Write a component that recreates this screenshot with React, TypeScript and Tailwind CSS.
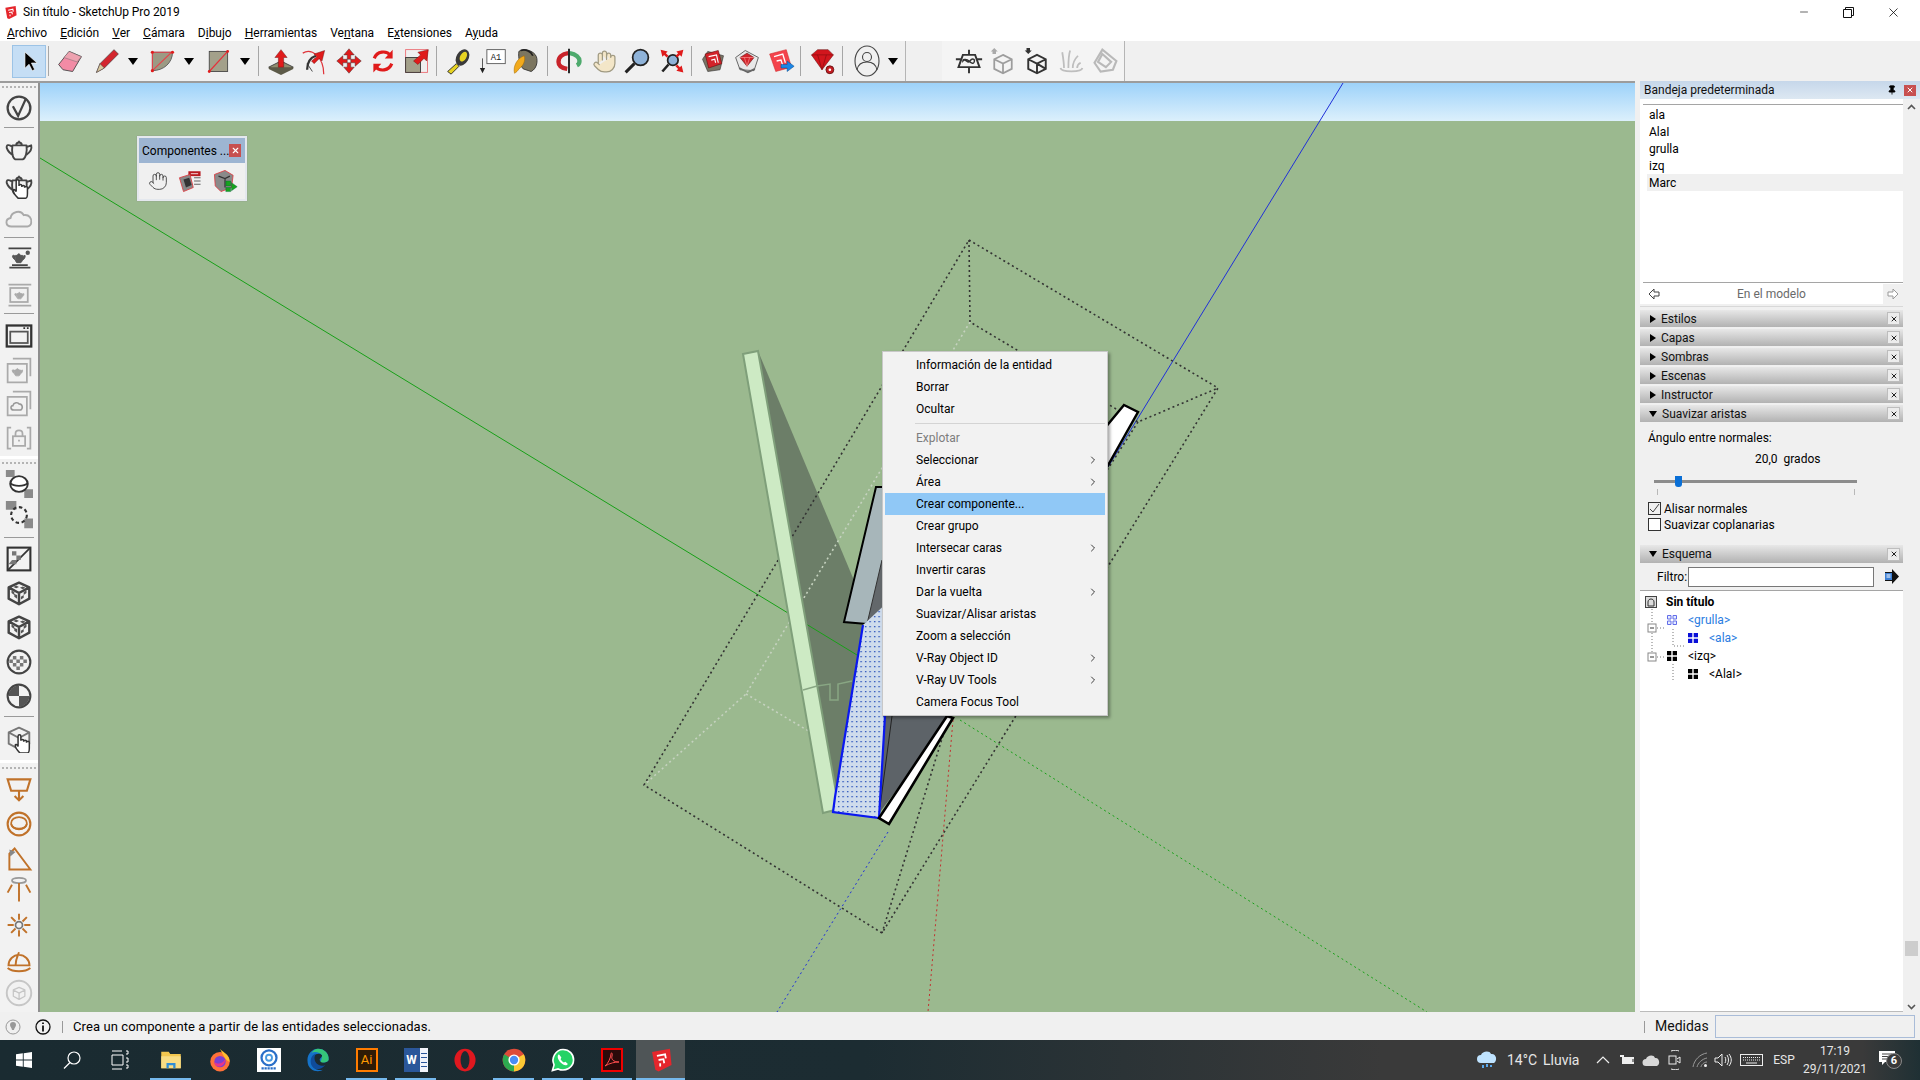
import type { ReactNode } from "react";
import { ChevronRight, Hand, Minus, Pin, X } from "lucide-react";

function Ic({ s = 28, children }: { s?: number; children: ReactNode }) {
  return (
    <svg viewBox="0 0 32 32" width={s} height={s} fill="none">
      {children}
    </svg>
  );
}

const Arrow4 = ({ color = "#e01b1b" }: { color?: string }) => (
  <>
    {[0, 90, 180, 270].map((r) => (
      <path key={r} d="M16 2l6 7h-4v5h-4V9h-4z" fill={color} stroke="#333" strokeWidth=".5" transform={`rotate(${r} 16 16)`} />
    ))}
  </>
);

const Cube = ({ c = "#444", w = 2.4 }: { c?: string; w?: number }) => (
  <path d="M16 5l11 5v12l-11 6-11-6V10zM5 10l11 6 11-6M16 16v12" stroke={c} strokeWidth={w} strokeLinejoin="round" />
);

const Teapot = ({ c = "#444", fill = "none" }: { c?: string; fill?: string }) => (
  <path d="M9 11h15c1 7-1 14-4 15h-8c-3-1-4-8-3-15zM9 13C5 9 2 11 3 14c1 3 4 6 7 8M24 13l5-2c1 4-2 8-5 10M13 11c0-4 6-4 6 0M16 6v1" stroke={c} strokeWidth="2" fill={fill} strokeLinejoin="round" />
);

const HandMini = () => (
  <path d="M15 30c-3-3-5-6-5-8 0-2 2-1 3 1V12c0-2 3-2 3 0v5c0-2 3-2 3 0v1c0-2 3-2 3 0v1c0-2 3-2 3 0v6c0 3-1 5-2 5z" fill="#fff" stroke="#333" strokeWidth="1.6" />
);

const CheckerBox = () => (
  <>
    <Cube c="#444" w={2.6} />
    <path d="M8 13l3 2v3l-3-2zM14 18v4l-3-2v-3zM21 15l3-2v3l-3 2zM18 20l3-2v3l-3 2zM13 8l3 1.500-3 1.500-3-1.500zM20 9l3 1.500-3 1.500-3-1.500z" fill="#555" />
  </>
);

const RubyBox = ({ c = "#d3232a" }: { c?: string }) => (
  <>
    <polygon points="4,14 10,5 28,10 24,26 10,28" fill="#7a7465" stroke="#333" strokeWidth=".7" />
    <polygon points="7,8 22,4 26,19 11,24" fill={c} stroke="#611" strokeWidth=".7" />
    <path d="M11 11l9-2 2 9M14 15l4-1 1 4" stroke="#fff" strokeWidth="1.300" />
  </>
);

const MiniGrid = ({ c = "#000", soft = false }: { c?: string; soft?: boolean }) => (
  <svg width="10" height="10" viewBox="0 0 10 10" className={soft ? "opacity-70" : ""}>
    {soft ? (
      <path d="M.5.500h3.500v3.500H.5zM6 .500h3.500v3.500H6zM.5 6h3.500v3.500H.5zM6 6h3.500v3.500H6z" stroke={c} strokeWidth="1" fill="#dbe6ff" />
    ) : (
      <path d="M0 0h4.300v4.300H0zM5.700 0H10v4.300H5.700zM0 5.700h4.300V10H0zM5.700 5.700H10V10H5.700z" fill={c} />
    )}
  </svg>
);

function Cell({ w = "w-[34px]", className = "", children }: { w?: string; className?: string; children?: ReactNode }) {
  return <div className={`flex h-[33px] shrink-0 items-center justify-center ${w} ${className}`}>{children}</div>;
}

const Sep = ({ className = "" }: { className?: string }) => <div className={`h-[30px] w-px shrink-0 bg-[#a6a6a6] ${className}`} />;

const Drop = ({ className = "" }: { className?: string }) => (
  <Cell w="w-[18px]" className={className}>
    <div className="h-0 w-0 border-x-[5px] border-t-[7px] border-x-transparent border-t-black" />
  </Cell>
);

function TopToolbar() {
  return (
    <div className="flex h-[42px] shrink-0 items-center border-b-2 border-[#9c9c9c] bg-[#f0f0f0] pl-[12px]">
      <Cell className="border border-[#9cc3e6] bg-[#c5def5]">
        <Ic s={26}><path d="M11 5v20l5-5 4 8 3-1.500-4-8h7z" fill="#000" stroke="#fff" strokeWidth=".8" /></Ic>
      </Cell>
      <Sep className="ml-[2px]" />
      <Cell className="ml-[4px]">
        <Ic><polygon points="3,20 15,5 29,11 19,28 8,26" fill="#f28ba5" stroke="#444" /><polygon points="15,5 29,11 24,17 9,12" fill="#eda2b0" stroke="#666" strokeWidth=".5" /></Ic>
      </Cell>
      <Cell className="ml-[3px]">
        <Ic><polygon points="4,29 8,19 24,3 29,8 13,24" fill="#d3262e" stroke="#333" strokeWidth=".7" /><polygon points="4,29 8,19 13,24" fill="#d8c9a0" stroke="#333" strokeWidth=".5" /></Ic>
      </Cell>
      <Drop />
      <Cell className="ml-[3px]">
        <Ic><path d="M5 6h23c0 12-10 21-23 21z" fill="#9c9a84" stroke="#555" /><path d="M5 27L27 6H5z" stroke="#e8414a" strokeWidth="1.200" /><circle cx="5" cy="27" r="1.800" fill="#e01b1b" /><circle cx="28" cy="6" r="1.800" fill="#e01b1b" /><circle cx="5" cy="6" r="1.800" fill="#e01b1b" /></Ic>
      </Cell>
      <Drop className="ml-px" />
      <Cell className="ml-[3px]">
        <Ic><rect x="6" y="5" width="21" height="23" fill="#a3a08a" stroke="#444" /><path d="M6 28L27 5" stroke="#e6303a" strokeWidth="1.400" /><circle cx="6" cy="28" r="1.600" fill="#e01b1b" /><circle cx="27" cy="5" r="1.600" fill="#e01b1b" /></Ic>
      </Cell>
      <Drop className="ml-px" />
      <Sep className="ml-[4px]" />
      <Cell className="ml-[5px]">
        <Ic><polygon points="16,16 30,23 16,30 2,23" fill="#8f8d70" stroke="#333" /><path d="M2 23v2l14 7 14-7v-2" fill="#5c5a48" /><path d="M16 3l7 9h-4v11h-6V12H9z" fill="#e01b1b" stroke="#611" strokeWidth=".5" /></Ic>
      </Cell>
      <Cell>
        <Ic><path d="M2 7c10-6 24 4 24 24" stroke="#e0353b" strokeWidth="1.400" /><path d="M7 26c0-9 4-14 10-16" stroke="#333" strokeWidth="2.600" /><path d="M15 8l12-4-3 12-3-3-6 6-3-3 6-5z" fill="#e01b1b" stroke="#611" strokeWidth=".5" /><path d="M13 28L7 19" stroke="#333" /></Ic>
      </Cell>
      <Cell><Ic><Arrow4 /></Ic></Cell>
      <Cell>
        <Ic><path d="M6 13a11 11 0 0 1 19-3M26 19a11 11 0 0 1-19 3" stroke="#e01b1b" strokeWidth="3.600" /><path d="M27 3v10H18zM5 29V19h9z" fill="#e01b1b" /></Ic>
      </Cell>
      <Cell>
        <Ic><rect x="3" y="3" width="25" height="26" stroke="#ea6a70" /><rect x="3" y="12" width="17" height="17" fill="#a3a08a" stroke="#333" /><path d="M12 16l8-7-3-3 12-3-2 13-3-3-7 7z" fill="#e01b1b" stroke="#611" strokeWidth=".5" /></Ic>
      </Cell>
      <Sep className="ml-[2px]" />
      <Cell className="ml-[5px]">
        <Ic><path d="M3 28l10-9 3 3-9 9z" fill="#e7d322" stroke="#222" /><ellipse cx="20" cy="12" rx="7" ry="10" transform="rotate(30 20 12)" fill="#3a3a3a" /><ellipse cx="21" cy="11" rx="3.500" ry="6" transform="rotate(30 21 11)" fill="#e7d322" /></Ic>
      </Cell>
      <Cell w="w-[32px]" className="ml-[1px]">
        <Ic><rect x="9" y="3" width="21" height="16" fill="#fff" stroke="#555" /><text x="19.500" y="15" fontSize="10" fontFamily="Liberation Mono" textAnchor="middle" fill="#222">A1</text><path d="M4 13v13" stroke="#444" /><path d="M1 24h6l-3 6z" fill="#222" /></Ic>
      </Cell>
      <Cell w="w-[32px]">
        <Ic><path d="M9 5c6-4 17-1 20 6 2 6 0 14-6 17l-9-3c-4-4-6-13-5-20z" fill="#7c7660" stroke="#333" /><path d="M4 30c-2-8 3-17 11-20 2 5-1 12-6 15-1 2-3 4-5 5z" fill="#f2aa1c" stroke="#a46c00" strokeWidth=".6" /><path d="M11 4c6-2 12 1 14 6" stroke="#222" strokeWidth="2" /></Ic>
      </Cell>
      <Sep className="ml-[6px]" />
      <Cell className="ml-[4px]">
        <Ic><path d="M15 7C8 8 4 12 4 17c0 4 4 7 10 8" stroke="#c8232a" strokeWidth="5" /><path d="M17 7c7 1 11 5 11 9 0 2-1 4-3 5" stroke="#4eaa6d" strokeWidth="5" /><path d="M16 2v28" stroke="#222" strokeWidth="2.200" /></Ic>
      </Cell>
      <Cell className="ml-[1px]">
        <Hand size={25} fill="#f3e6c8" stroke="#a09a82" strokeWidth={1.200} />
      </Cell>
      <Cell w="w-[32px]">
        <Ic><circle cx="20" cy="12" r="9" fill="#8fb3d9" stroke="#222" strokeWidth="2" /><path d="M13 19L3 29" stroke="#222" strokeWidth="3.400" /></Ic>
      </Cell>
      <Cell className="ml-[2px]">
        <Ic><circle cx="17" cy="15" r="6" fill="#8fb3d9" stroke="#222" strokeWidth="2" /><path d="M12 20L5 28" stroke="#222" strokeWidth="3" /><path d="M3 3l8 2-2 2 3 3-2 2-3-3-2 2zM29 3l-2 8-2-2-3 3-2-2 3-3-2-2zM29 29l-8-2 2-2-3-3 2-2 3 3 2-2z" fill="#e01b1b" /></Ic>
      </Cell>
      <Sep className="ml-[2px]" />
      <Cell className="ml-[4px]"><Ic><RubyBox /></Ic></Cell>
      <Cell>
        <Ic><polygon points="3,12 14,4 29,12 24,27 8,26" fill="#e8e8e8" stroke="#555" /><polygon points="8,12 16,7 24,12 16,22" fill="#d3232a" stroke="#611" strokeWidth=".7" /><path d="M8 12h16M13 12l3 10 3-10" stroke="#ff9a9a" strokeWidth=".7" /><path d="M7 24l10 5 8-4" stroke="#666" strokeWidth="2" /></Ic>
      </Cell>
      <Cell>
        <Ic><polygon points="3,8 22,3 28,23 10,28" fill="#f4434c" stroke="#c22" strokeWidth=".6" /><path d="M8 11l10-3 3 10M11 16l5-1 2 6" stroke="#fff" strokeWidth="1.500" /><path d="M16 20h7v-4l8 6-8 6v-4h-7z" fill="#1c86e6" stroke="#0b4f8f" strokeWidth=".6" /></Ic>
      </Cell>
      <Sep className="ml-[2px]" />
      <Cell className="ml-[4px]">
        <Ic><polygon points="4,9 11,3 23,3 29,9 16,26" fill="#d2161d" stroke="#611" strokeWidth=".6" /><path d="M4 9h25M11 9l5 17 5-17" stroke="#8c0c10" strokeWidth=".8" /><circle cx="25" cy="26" r="4.500" fill="#c41c22" stroke="#611" /><circle cx="25" cy="26" r="1.500" fill="#fff" /></Ic>
      </Cell>
      <Sep className="ml-[3px]" />
      <Cell className="ml-[7px]">
        <Ic s={32}><ellipse cx="16" cy="16" rx="12" ry="15" stroke="#444" strokeWidth="1.100" /><circle cx="16" cy="12" r="4.500" stroke="#444" strokeWidth="1.100" /><path d="M6 25c1-6 5-8 10-8s9 2 10 8" stroke="#444" strokeWidth="1.100" /></Ic>
      </Cell>
      <Drop />
      <div className="ml-[3px] h-full w-px bg-[#b5b5b5]" />

      <div className="ml-[36px] flex h-full items-center border-r border-[#b5b5b5] bg-[#f4f4f4] pl-[10px] pr-[2px]">
        <Cell>
          <Ic><path d="M9 9h14l5 14H4zM1 14h6M25 14h6M16 3v6M16 23v7" stroke="#333" strokeWidth="2.200" /><path d="M9 16c3-4 5 4 8 0s6-2 5 1-4 1-6-1-7-3-7 0z" stroke="#333" strokeWidth="1.600" /></Ic>
        </Cell>
        <Cell><Ic><g opacity=".55"><path d="M16 9l10 5v11l-10 5-10-5V14zM6 14l10 5 10-5M16 19v11" stroke="#555" strokeWidth="2" /></g><path d="M6 1l4 4H8v3H4V5H2z" fill="#aaa" /></Ic></Cell>
        <Cell>
          <Ic><path d="M16 9l10 5v11l-10 5-10-5V14zM6 14l10 5 10-5M16 19v11M16 19l10 6" stroke="#333" strokeWidth="2.200" /><path d="M6 8L2 4h2V1h4v3h2z" fill="#333" /></Ic>
        </Cell>
        <Cell>
          <Ic><g opacity=".5" stroke="#888" strokeWidth="2"><path d="M4 24c1 5 24 5 25 0M8 24c0-6-1-12-2-18M13 24c0-8 0-14 2-20M18 24c0-6 2-10 6-14M23 24c0-3 2-5 4-6" /></g></Ic>
        </Cell>
        <Cell>
          <Ic><g opacity=".55" stroke="#888" strokeWidth="2.400"><path d="M4 18L13 3l16 13-4 10-14 2zM13 8l10 9-6 6-9-6z" /></g></Ic>
        </Cell>
      </div>
    </div>
  );
}

function VCell({ mt, children }: { mt: string; children?: ReactNode }) {
  return <div className={`flex h-[30px] w-full shrink-0 items-center justify-center ${mt}`}>{children}</div>;
}

const HLine = ({ mt }: { mt: string }) => <div className={`mx-auto h-px w-[30px] shrink-0 bg-[#9a9a9a] ${mt}`} />;

const Grip = ({ mt }: { mt: string }) => (
  <div className={`mx-auto h-0 w-[34px] shrink-0 border-t-2 border-dotted border-[#b4b4b4] ${mt}`} />
);

function LeftToolbar() {
  const g = "#aaa";
  const o = "#c0722a";
  return (
    <div className="flex w-[40px] shrink-0 flex-col overflow-hidden border-r-2 border-[#8f8f8f] bg-[#f2f2f2]">
      <Grip mt="mt-[3px]" />
      <VCell mt="mt-[5px]"><Ic><circle cx="16" cy="16" r="13" stroke="#444" strokeWidth="2.600" /><path d="M9 14l6 11c3-7 6-13 9-20" stroke="#444" strokeWidth="2.600" /></Ic></VCell>
      <HLine mt="mt-[4px]" />
      <VCell mt="mt-[7px]"><Ic s={30}><Teapot /></Ic></VCell>
      <VCell mt="mt-[5px]"><Ic s={30}><Teapot /><HandMini /></Ic></VCell>
      <VCell mt="mt-[3px]"><Ic s={30}><path d="M8 25c-7 0-7-8-1-9 1-7 11-9 14-3 6-1 9 4 8 8 0 2-2 4-4 4z" stroke={g} strokeWidth="2" /></Ic></VCell>
      <HLine mt="mt-[4px]" />
      <VCell mt="mt-[5px]"><Ic><path d="M4 5h26M5 27h24M8 24h18" stroke="#444" strokeWidth="2" /><g transform="translate(7 7) scale(.55)"><Teapot c="#555" fill="#555" /></g><circle cx="26" cy="10" r="2.500" fill="#555" /></Ic></VCell>
      <VCell mt="mt-[7px]"><Ic><path d="M4 4h26M4 28h26" stroke={g} strokeWidth="2" /><rect x="6" y="8" width="20" height="16" stroke={g} strokeWidth="2" /><g transform="translate(10 10) scale(.4)"><Teapot c={g} fill={g} /></g></Ic></VCell>
      <HLine mt="mt-[3px]" />
      <VCell mt="mt-[7px]"><Ic><rect x="2" y="4" width="28" height="24" stroke="#333" strokeWidth="2.600" /><rect x="6" y="11" width="20" height="13" stroke="#555" strokeWidth="2" /><path d="M21 7h2M25 7h2" stroke="#333" strokeWidth="1.800" /></Ic></VCell>
      <VCell mt="mt-[4px]"><Ic><path d="M9 3h20v20M3 9h22v21H3z" stroke={g} strokeWidth="2" /><g transform="translate(7 11) scale(.45)"><Teapot c={g} fill={g} /></g></Ic></VCell>
      <VCell mt="mt-[3px]"><Ic><path d="M9 3h20v20M3 9h22v21H3z" stroke={g} strokeWidth="2" /><path d="M10 24c-4 0-4-5-1-5 1-4 6-4 7-2 4 0 5 5 2 7z" stroke="#999" strokeWidth="1.800" /></Ic></VCell>
      <VCell mt="mt-[5px]"><Ic><path d="M7 4H3v24h4M25 4h4v24h-4" stroke={g} strokeWidth="2" /><rect x="9" y="14" width="14" height="11" stroke={g} strokeWidth="2" /><path d="M12 14v-3c0-5 8-5 8 0v3M16 18v2" stroke={g} strokeWidth="2" /></Ic></VCell>
      <div className="mt-[3px] h-[3px] w-full shrink-0 bg-white" />
      <Grip mt="mt-[3px]" />
      <VCell mt="mt-[5px]">
        <Ic><path d="M1 0h10v8H1zM22 22h10v10H22z" fill="#8a8a8a" /><ellipse cx="16" cy="16" rx="10" ry="9" fill="#fff" stroke="#333" strokeWidth="2.200" /><path d="M6 15c4 4 16 4 20 0" stroke="#333" strokeWidth="2" /></Ic>
      </VCell>
      <VCell mt="mt-px">
        <Ic><path d="M1 0h12v10H1zM22 20h10v11H22z" fill="#8a8a8a" /><circle cx="16" cy="16" r="9" stroke="#333" strokeWidth="2.400" strokeDasharray="4 3" /></Ic>
      </VCell>
      <HLine mt="mt-[7px]" />
      <VCell mt="mt-[6px]"><Ic><rect x="3" y="3" width="26" height="26" stroke="#333" strokeWidth="2.400" /><path d="M3 29L29 3" stroke="#333" strokeWidth="2" /><path d="M8 7h5v5H8zM13 12h5v5h-5zM4 22l4-5h5v5z" fill="#777" /></Ic></VCell>
      <VCell mt="mt-[4px]"><Ic s={30}><CheckerBox /></Ic></VCell>
      <VCell mt="mt-[4px]"><Ic s={30}><CheckerBox /></Ic></VCell>
      <VCell mt="mt-[5px]"><Ic><circle cx="16" cy="16" r="13" stroke="#444" strokeWidth="2.400" /><path d="M9 9h4v4H9zM17 9h4v4h-4zM13 13h4v4h-4zM21 13h4v4h-4zM5 13h4v4H5zM9 17h4v4H9zM17 17h4v4h-4zM13 21h4v4h-4z" fill="#777" /></Ic></VCell>
      <VCell mt="mt-[4px]"><Ic><circle cx="16" cy="16" r="13" stroke="#444" strokeWidth="2.400" /><path d="M4 16a12 12 0 0 1 12-12v12zM16 16h12a12 12 0 0 1-12 12z" fill="#555" /></Ic></VCell>
      <HLine mt="mt-[5px]" />
      <VCell mt="mt-[6px]"><Ic s={30}><Cube c="#777" w={2} /><g transform="translate(2 2)"><HandMini /></g></Ic></VCell>
      <div className="mt-[7px] h-[3px] w-full shrink-0 bg-white" />
      <Grip mt="mt-[4px]" />
      <VCell mt="mt-[5px]"><Ic><path d="M3 5h26l-4 13H7zM16 18v11M11 24l5 5 5-5" stroke={o} strokeWidth="2.400" /></Ic></VCell>
      <VCell mt="mt-[5px]"><Ic><circle cx="16" cy="16" r="13" stroke={o} strokeWidth="2.400" /><ellipse cx="16" cy="15" rx="9" ry="7" stroke={o} strokeWidth="2" /><path d="M7 16c2 7 16 7 18 0" stroke={o} strokeWidth="2" /></Ic></VCell>
      <VCell mt="mt-[5px]"><Ic><path d="M5 28L29 28 11 4 5 10z" stroke={o} strokeWidth="2.200" /><path d="M5 5l7 3-6 5z" fill="#888" /></Ic></VCell>
      <VCell mt="mt-px"><Ic><ellipse cx="16" cy="5" rx="8" ry="3" stroke="#999" strokeWidth="2" /><path d="M16 8v21M8 10L3 19M24 10l5 9" stroke={o} strokeWidth="2.200" /></Ic></VCell>
      <VCell mt="mt-[5px]"><Ic><circle cx="16" cy="16" r="4" stroke="#777" strokeWidth="2" /><path d="M16 3v7M16 22v7M3 16h7M22 16h7M7 7l5 5M20 20l5 5M25 7l-5 5M12 20l-5 5" stroke={o} strokeWidth="2.200" /></Ic></VCell>
      <VCell mt="mt-[6px]"><Ic><path d="M4 21a12 12 0 0 1 24 0zM12 21c0-7 3-12 4-15M3 24c6 5 20 5 26 0" stroke={o} strokeWidth="2.200" /></Ic></VCell>
      <VCell mt="mt-[2px]"><Ic><circle cx="16" cy="16" r="14" stroke="#c6c6c6" strokeWidth="2.200" /><g transform="translate(6.500 6.500) scale(.6)"><Cube c="#c6c6c6" /></g></Ic></VCell>
    </div>
  );
}

function Scene() {
  const dark = { stroke: "#333", strokeWidth: 1.600, strokeDasharray: "2 3" };
  const light = { stroke: "#c5d2bf", strokeWidth: 1.600, strokeDasharray: "2 3" };
  return (
    <svg viewBox="40 83 1595 929" className="absolute inset-0 h-full w-full">
      <defs>
        <pattern id="dots" width="4.500" height="5" patternUnits="userSpaceOnUse">
          <rect width="4.500" height="5" fill="#cfdcec" />
          <rect x="1" y="1" width="1.300" height="1.300" fill="#1e49b8" />
        </pattern>
      </defs>
      <polygon points="758,351 853,578 863,625 835,795" fill="#6c7e68" />
      <path d="M40 158L857 655" stroke="#18a018" />
      <path d="M960 720L1427 1012" stroke="#18a018" strokeDasharray="2 3" />
      <path d="M1343 83L1108 467" stroke="#2030d8" />
      <path d="M888 832L777 1012" stroke="#2030d8" strokeDasharray="2 3" />
      <path d="M953 720L928 1012" stroke="#c23030" strokeDasharray="2 3" />
      <path d="M970 322L746 694L644 785M746 694L812 733" {...light} fill="none" />
      <path d="M969 240L1218 388L882 933L644 785ZM969 240L970 322L1138 422L1218 388M1138 422L949 716L882 933" {...dark} fill="none" />
      <polygon points="743,354 758,351 839,809 823,813" fill="#cdeac4" stroke="#7f9f7a" strokeWidth="2" />
      <path d="M803 690L817 686L830 684V700H838V684L852 681" stroke="#88a683" strokeWidth="1.500" fill="none" />
      <polygon points="876,487 890,487 890,590 867,624 844,622" fill="#a7b6ba" stroke="#000" strokeWidth="2" />
      <polygon points="867,624 882,560 890,560 890,600" fill="#63686b" stroke="#333" />
      <polygon points="885,716 952,716 880,812" fill="#5d6368" />
      <path d="M892 716L880 807" stroke="#222" />
      <polygon points="863,625 890,600 885,716 879,818 833,812 835,795" fill="url(#dots)" />
      <path d="M863 625L835 797L833 812L879 818L885 716" stroke="#0a18f0" strokeWidth="2.200" fill="none" />
      <polygon points="947,716 953,718 889,824 879,818" fill="#fff" stroke="#000" strokeWidth="2.600" />
      <polygon points="1124,405 1138,412 1107,467 1095,440" fill="#fff" stroke="#000" strokeWidth="2.400" />
    </svg>
  );
}

const menuItems = [
  { label: "Explotar", disabled: true },
  { label: "Seleccionar", arrow: true },
  { label: "Área", arrow: true },
  { label: "Crear componente...", active: true },
  { label: "Crear grupo" },
  { label: "Intersecar caras", arrow: true },
  { label: "Invertir caras" },
  { label: "Dar la vuelta", arrow: true },
  { label: "Suavizar/Alisar aristas" },
  { label: "Zoom a selección" },
  { label: "V-Ray Object ID", arrow: true },
  { label: "V-Ray UV Tools", arrow: true },
  { label: "Camera Focus Tool" },
];

function MenuRow({ label, disabled, arrow, active }: { label: string; disabled?: boolean; arrow?: boolean; active?: boolean }) {
  return (
    <div className={`flex h-[22px] items-center justify-between pl-[31px] pr-[6px] ${active ? "bg-[#90c8f6]" : ""} ${disabled ? "text-[#7d7d7d]" : "text-black"}`}>
      <span>{label}</span>
      {arrow && <ChevronRight size={12} strokeWidth={1.500} />}
    </div>
  );
}

function ContextMenu() {
  return (
    <div className="absolute left-[842px] top-[268px] w-[226px] border border-[#c8c8c8] bg-[#f2f2f2] p-[2px] text-[12px] shadow-[2px_2px_3px_rgba(0,0,0,0.35)]">
      <MenuRow label="Información de la entidad" />
      <MenuRow label="Borrar" />
      <MenuRow label="Ocultar" />
      <div className="my-[3px] ml-[30px] h-px bg-[#d4d4d4]" />
      {menuItems.map((m) => (
        <MenuRow key={m.label} {...m} />
      ))}
    </div>
  );
}

function ComponentsWindow() {
  return (
    <div className="absolute left-[97px] top-[53px] w-[110px] border-2 border-[#e4e8ee] bg-[#f0f0f0] shadow-[0_0_1px_#888]">
      <div className="flex h-[25px] items-center justify-between whitespace-nowrap bg-[#9db5d2] pl-[3px] pr-[4px] text-[12px] text-black">
        <span>Componentes ...</span>
        <span className="flex h-[13px] w-[12px] items-center justify-center bg-[#c75050] text-white"><X size={9} strokeWidth={3} /></span>
      </div>
      <div className="flex h-[36px] items-center gap-[9px] pl-[9px]">
        <Hand size={20} strokeWidth={1} stroke="#333" />
        <Ic s={26}><path d="M14 4h15v6H14z" fill="#b81a20" /><path d="M17 7h9" stroke="#fff" /><polygon points="3,12 16,8 20,24 8,29" fill="#888" stroke="#e0353b" /><path d="M8 14l7-2 3 9-7 3z" fill="#333" /><path d="M21 12h8M21 16h8M21 20h8" stroke="#444" /></Ic>
        <Ic s={26}><polygon points="3,8 16,3 26,9 24,24 11,29 4,22" fill="#8a8a8a" stroke="#e0353b" /><path d="M8 10l8 3 6-3M16 13v11" stroke="#333" strokeWidth="1.500" /><path d="M17 16h6v6h-6zM24 18l7 5-7 5zM17 24h6v5h-6z" fill="#17a31e" stroke="#063" strokeWidth=".5" /></Ic>
      </div>
    </div>
  );
}

function Viewport() {
  return (
    <div className="relative flex min-w-0 flex-1 flex-col overflow-hidden">
      <div className="h-[38px] shrink-0 bg-gradient-to-b from-[#9dd2f9] to-[#dcf0fc]" />
      <div className="flex-1 bg-[#9bb98f]" />
      <Scene />
      <ComponentsWindow />
      <ContextMenu />
    </div>
  );
}

function XBox() {
  return (
    <span className="flex h-[13px] w-[13px] items-center justify-center border border-[#bdbdbd] bg-[#ececec]">
      <X size={8} strokeWidth={3} className="text-[#222]" />
    </span>
  );
}

function Section({ label, open = false, className = "" }: { label: string; open?: boolean; className?: string }) {
  return (
    <div className={`flex h-[17px] shrink-0 items-center bg-gradient-to-b from-[#e8e8e8] to-[#b2b2b2] pl-[9px] pr-[3px] text-[12px] text-[#111] ${className}`}>
      {open ? (
        <div className="h-0 w-0 border-x-[4px] border-t-[6px] border-x-transparent border-t-black" />
      ) : (
        <div className="ml-[1px] h-0 w-0 border-y-[4px] border-l-[6px] border-y-transparent border-l-black" />
      )}
      <span className="ml-[5px]">{label}</span>
      <span className="ml-auto"><XBox /></span>
    </div>
  );
}

function TreeRow({ pl, gap, grid, label, color = "text-black", bold = false }: { pl: string; gap: string; grid: ReactNode; label: string; color?: string; bold?: boolean }) {
  return (
    <div className={`flex h-[18px] items-center ${pl} ${color} ${bold ? "font-bold" : ""}`}>
      <span className={`flex justify-center ${gap}`}>{grid}</span>
      <span>{label}</span>
    </div>
  );
}

function RightPanel() {
  return (
    <div className="relative -mt-[2px] flex w-[285px] shrink-0 flex-col bg-[#f0f0f0] pl-[5px] text-[12px] text-black">
      <div className="flex h-[18px] shrink-0 items-center bg-gradient-to-b from-[#c6d7ea] to-[#dde8f2] pl-[4px] pr-[4px]">
        <span className="text-[#111]">Bandeja predeterminada</span>
        <Pin size={10} fill="#000" className="ml-auto mr-[7px] text-black" />
        <span className="flex h-[11px] w-[12px] items-center justify-center bg-[#c75050] text-white"><X size={8} strokeWidth={3} /></span>
      </div>
      <div className="flex min-h-0 flex-1">
        <div className="flex w-[263px] shrink-0 flex-col">
          <div className="flex h-[205px] shrink-0 flex-col bg-white">
            <div className="ml-[3px] mt-[5px] h-px bg-[#a5a5a5]" />
            <div className="pl-[7px] pt-px">
              {["ala", "AlaI", "grulla", "izq", "Marc"].map((t) => (
                <div key={t} className={`flex h-[17px] items-center pl-[2px] ${t === "Marc" ? "bg-[#f0f0f0]" : ""}`}>{t}</div>
              ))}
            </div>
            <div className="ml-[3px] mt-auto h-px bg-[#a5a5a5]" />
            <div className="flex h-[21px] items-center pl-[8px]">
              <svg width="12" height="12" viewBox="0 0 12 12"><path d="M6 1L1 6l5 5V8h5V4H6z" fill="#fff" stroke="#444" /></svg>
              <span className="flex-1 text-center text-[#6a6a6a]">En el modelo</span>
              <span className="flex h-[20px] w-[20px] items-center justify-center bg-[#f0f0f0]">
                <svg width="12" height="12" viewBox="0 0 12 12"><path d="M6 1l5 5-5 5V8H1V4h5z" fill="#fff" stroke="#999" /></svg>
              </span>
            </div>
          </div>
          <div className="mt-[2px] h-px shrink-0 bg-[#d8d8d8]" />
          <div className="mt-[3px] flex flex-col gap-[2px]">
            <Section label="Estilos" />
            <Section label="Capas" />
            <Section label="Sombras" />
            <Section label="Escenas" />
            <Section label="Instructor" />
            <Section label="Suavizar aristas" open />
          </div>
          <div className="flex h-[123px] shrink-0 flex-col pl-[8px]">
            <div className="mt-[8px] h-[16px] leading-[16px]">Ángulo entre normales:</div>
            <div className="ml-[107px] mt-[5px] h-[16px] whitespace-pre leading-[16px]">20,0  grados</div>
            <div className="relative ml-[6px] mt-[8px] h-[14px] w-[203px]">
              <div className="absolute left-0 right-0 top-[5px] h-[3px] bg-[#8c8c8c]" />
              <div className="absolute left-[21px] top-[1px] h-[11px] w-[7px] rounded-b-[3px] bg-[#0a6fd6]" />
            </div>
            <div className="ml-[9px] flex h-[6px] w-[198px] justify-between">
              <div className="w-px bg-[#b8b8b8]" />
              <div className="w-px bg-[#b8b8b8]" />
            </div>
            <div className="mt-[7px] flex h-[13px] items-center gap-[3px]">
              <span className="flex h-[13px] w-[13px] items-center justify-center border border-[#333] bg-[#f0f0f0]">
                <svg width="11" height="11" viewBox="0 0 11 11"><path d="M1 6l3 3 6-8" stroke="#444" fill="none" /></svg>
              </span>
              <span>Alisar normales</span>
            </div>
            <div className="mt-[3px] flex h-[13px] items-center gap-[3px]">
              <span className="h-[13px] w-[13px] border border-[#333] bg-white" />
              <span>Suavizar coplanarias</span>
            </div>
          </div>
          <Section label="Esquema" open className="h-[18px]" />
          <div className="flex h-[28px] shrink-0 items-center border-b border-[#a5a5a5] pl-[17px]">
            <span className="w-[31px]">Filtro:</span>
            <div className="h-[20px] w-[186px] border border-[#777] bg-white" />
            <svg width="15" height="15" viewBox="0 0 15 15" className="ml-[10px]"><path d="M1 3h7V0l7 7.500L8 15v-3H1z" fill="#111" /><rect x="1" y="4" width="7" height="7" fill="#3d7fd4" /><path d="M2.500 6h4M2.500 8h4" stroke="#fff" /></svg>
          </div>
          <div className="relative min-h-0 flex-1 border-b border-[#bbb] bg-white pt-[2px]">
            <svg width="60" height="90" className="absolute left-0 top-0">
              <path d="M12 18V66M14 37h12M33 38v17h12M14 66h12M33 73v18h12" stroke="#777" strokeDasharray="1 2" fill="none" />
              <rect x="8" y="33" width="8" height="8" fill="#fff" stroke="#888" />
              <path d="M10 37h4" stroke="#333" />
              <rect x="8" y="62" width="8" height="8" fill="#fff" stroke="#888" />
              <path d="M10 66h4" stroke="#333" />
            </svg>
            <div className="relative">
              <TreeRow pl="pl-[5px]" gap="mr-[9px] w-[12px]" label="Sin título" bold grid={
                <svg width="12" height="12" viewBox="0 0 12 12"><rect x=".5" y=".5" width="11" height="11" fill="#ddd" stroke="#444" /><path d="M3 10V6c0-4 6-4 6 0v4z" stroke="#333" fill="none" /></svg>
              } />
              <TreeRow pl="pl-[26px]" gap="mr-[10px] w-[12px]" label="<grulla>" color="text-[#2a7de1]" grid={<MiniGrid c="#2230e0" soft />} />
              <TreeRow pl="pl-[47px]" gap="mr-[10px] w-[12px]" label="<ala>" color="text-[#2a7de1]" grid={<MiniGrid c="#0a10d8" />} />
              <TreeRow pl="pl-[26px]" gap="mr-[10px] w-[12px]" label="<izq>" grid={<MiniGrid />} />
              <TreeRow pl="pl-[47px]" gap="mr-[10px] w-[12px]" label="<AlaI>" grid={<MiniGrid />} />
            </div>
          </div>
        </div>
        <div className="relative flex w-[17px] shrink-0 flex-col items-center justify-between pb-[2px] pt-[5px] text-[#555]">
          <svg width="9" height="6" viewBox="0 0 9 6"><path d="M1 5l3.500-3.500L8 5" stroke="#555" strokeWidth="1.600" fill="none" /></svg>
          <div className="absolute left-[2px] top-[842px] h-[15px] w-[13px] bg-[#cdcdcd]" />
          <svg width="9" height="6" viewBox="0 0 9 6"><path d="M1 1l3.500 3.500L8 1" stroke="#555" strokeWidth="1.600" fill="none" /></svg>
        </div>
      </div>
    </div>
  );
}

function StatusBar() {
  return (
    <div className="flex h-[28px] shrink-0 items-center bg-[#f0f0f0] pt-px text-[13px] text-black">
      <svg width="16" height="16" viewBox="0 0 16 16" className="ml-[5px]"><circle cx="8" cy="8" r="7" stroke="#999" fill="none" /><path d="M5 6a3 3 0 0 1 6 0c0 2-2 3-2 5H7c0-2-2-3-2-5z" fill="#999" /></svg>
      <svg width="16" height="16" viewBox="0 0 16 16" className="ml-[14px]"><circle cx="8" cy="8" r="7" stroke="#111" strokeWidth="1.300" fill="none" /><path d="M8 3.500v1.500M8 6.500V12.500" stroke="#111" strokeWidth="1.800" /></svg>
      <div className="ml-[11px] h-[12px] w-px bg-[#999]" />
      <span className="ml-[10px] tracking-[0.1px]">Crea un componente a partir de las entidades seleccionadas.</span>
      <div className="ml-auto h-[12px] w-px bg-[#999]" />
      <span className="ml-[10px] w-[51px] text-[14px] text-[#111]">Medidas</span>
      <div className="ml-[9px] mr-[5px] h-[23px] w-[200px] border border-[#a9bcd8] bg-[#f0f0f0]" />
    </div>
  );
}

function TaskApp({ on = false, active = false, children }: { on?: boolean; active?: boolean; children: ReactNode }) {
  return (
    <div className={`relative flex h-[40px] w-[49px] shrink-0 items-center justify-center ${active ? "bg-[#4f5557]" : ""}`}>
      {children}
      {(on || active) && <div className={`absolute bottom-0 h-[2px] bg-[#76b9ed] ${active ? "inset-x-0" : "inset-x-[4px]"}`} />}
    </div>
  );
}

const SketchUpLogo = ({ s = 24 }: { s?: number }) => (
  <Ic s={s}>
    <polygon points="5,6 27,2 29,22 13,30 9,28" fill="#e5262c" />
    <path d="M11 11l10-2 1 5M13 16l6-1 1 5M15 20v4" stroke="#fff" strokeWidth="2.200" fill="none" />
  </Ic>
);

function Taskbar() {
  return (
    <div className="flex h-[40px] shrink-0 items-center bg-[linear-gradient(90deg,#1a2b31_0%,#1c2c32_45%,#3a3a3a_72%,#3a3a3a_97%,#1f3034_100%)] text-[#e8e8e8]">
      <div className="flex w-[48px] justify-center">
        <svg width="16" height="16" viewBox="0 0 16 16"><path d="M0 2.300l6.800-1v6.200H0zM7.700 1.200L16 0v7.500H7.700zM0 8.500h6.800v6.200l-6.800-1zM7.700 8.500H16V16l-8.300-1.200z" fill="#fff" /></svg>
      </div>
      <div className="flex w-[48px] justify-center">
        <svg width="18" height="18" viewBox="0 0 18 18"><circle cx="11" cy="7" r="6" stroke="#fff" strokeWidth="1.200" fill="none" /><path d="M7 11.500L1 17.500" stroke="#fff" strokeWidth="1.300" /></svg>
      </div>
      <div className="flex w-[48px] justify-center">
        <svg width="18" height="20" viewBox="0 0 18 20"><path d="M1 1h10M1 19h10M1 5h11v10H1zM15 1h2v3h-2M15 8h2v4h-2M15 15h2v3h-2" stroke="#fff" fill="none" /></svg>
      </div>
      <div className="ml-[2px] flex">
        <TaskApp on>
          <Ic s={24}><path d="M3 5h10l2 3h14v19H3z" fill="#f3c74f" /><path d="M3 11h26v16H3z" fill="#f9dd84" /><path d="M10 20h12v7h-3v-4h-6v4h-3z" fill="#2f8ed6" /></Ic>
        </TaskApp>
        <TaskApp>
          <Ic s={26}><circle cx="16" cy="18" r="12" fill="#ff7139" /><path d="M16 2c4 5 11 6 12 16-5-1-8-8-12-16z" fill="#ffbd2e" /><circle cx="16" cy="18" r="7" fill="#7b3fd1" /><path d="M9 18c2 3 10 4 13-3 1 5-3 9-7 9s-6-3-6-6z" fill="#e8348b" /></Ic>
        </TaskApp>
        <TaskApp>
          <div className="flex h-[24px] w-[24px] items-end justify-center bg-white">
            <Ic s={24}><circle cx="16" cy="13" r="10" stroke="#2a6fc8" strokeWidth="3" /><circle cx="16" cy="13" r="4" stroke="#4a9ae0" strokeWidth="2.500" /><path d="M6 27h20" stroke="#2a6fc8" strokeWidth="3" strokeDasharray="3 1" /></Ic>
          </div>
        </TaskApp>
        <TaskApp>
          <Ic s={26}><path d="M3 16C3 8 9 2 16 2c8 0 14 6 13 14-1 4-10 4-11 0 0-3 3-3 3-6-4-4-13-1-13 8 0 6 6 12 14 10-3 3-19 4-19-12z" fill="#1573c9" /><path d="M16 2c8 0 14 6 13 14-1 3-7 4-10 2 1-3 2-4 2-8-2-3-8-5-13-3 2-3 5-5 8-5z" fill="#35c67a" /><path d="M7 18c0-6 3-9 7-10-3 3-3 8 0 12 3 3 7 4 11 2-3 4-9 6-12 5-4-2-6-5-6-9z" fill="#0f4c9a" /></Ic>
        </TaskApp>
        <TaskApp on>
          <div className="flex h-[24px] w-[22px] items-center justify-center border-2 border-[#ff7c00] bg-[#2f1b06] text-[13px] text-[#ff9a00]">Ai</div>
        </TaskApp>
        <TaskApp on>
          <div className="relative flex h-[24px] w-[24px] items-center bg-[#f1f4fa]">
            <div className="flex h-full w-[16px] items-center justify-center bg-[#2b579a] text-[12px] font-bold text-white">W</div>
            <div className="ml-[1px] flex h-[14px] w-[6px] flex-col justify-between">
              <div className="h-px bg-[#2b579a]" /><div className="h-px bg-[#2b579a]" /><div className="h-px bg-[#2b579a]" /><div className="h-px bg-[#2b579a]" />
            </div>
          </div>
        </TaskApp>
        <TaskApp>
          <Ic s={26}><ellipse cx="16" cy="16" rx="13" ry="14" fill="#e0181f" /><ellipse cx="16" cy="16" rx="5.500" ry="11" fill="#1d2c32" /></Ic>
        </TaskApp>
        <TaskApp on>
          <Ic s={26}><circle cx="16" cy="16" r="14" fill="#dd4b39" /><path d="M16 16L28 9A14 14 0 0 1 16 30z" fill="#fcc934" /><path d="M16 16L16 30A14 14 0 0 1 4 9z" fill="#2da94f" /><circle cx="16" cy="16" r="6" fill="#4a8df6" stroke="#fff" strokeWidth="1.800" /></Ic>
        </TaskApp>
        <TaskApp on>
          <Ic s={26}><path d="M3 29l2-7C1 14 7 3 16 3c8 0 13 6 13 13 0 9-10 15-19 11z" fill="#25d366" stroke="#fff" strokeWidth="2" /><path d="M11 9c-3 2-1 7 2 10s7 5 9 2l-3-3-2 1c-2-1-3-3-4-4l1-2z" fill="#fff" /></Ic>
        </TaskApp>
        <TaskApp on>
          <div className="flex h-[24px] w-[22px] items-center justify-center border-2 border-[#e00] bg-[#2a0a0a]">
            <svg width="16" height="16" viewBox="0 0 16 16"><path d="M1 14c3-2 6-9 6-12 0-2 2-1 1 2S9 10 15 10c-4 0-9 1-14 4z" stroke="#ff4d4d" fill="none" /></svg>
          </div>
        </TaskApp>
        <TaskApp active><SketchUpLogo s={26} /></TaskApp>
      </div>
      <div className="ml-auto flex items-center text-[#e6e6e6]">
        <span className="flex w-[22px] justify-center">
          <svg width="22" height="22" viewBox="0 0 22 22"><path d="M5 14a4 4 0 0 1 0-8c1-4 9-5 10-1 5-1 7 6 3 9z" fill="#bfe3ff" /><path d="M7 16v3M11 15v3M15 16v2" stroke="#59a9ee" strokeWidth="2" /></svg>
        </span>
        <span className="ml-[9px] w-[30px] whitespace-nowrap text-[14px]">14°C</span>
        <span className="ml-[6px] w-[40px] text-[14px]">Lluvia</span>
        <span className="ml-[10px] flex w-[20px] justify-center">
          <svg width="14" height="8" viewBox="0 0 14 8"><path d="M1 7l6-6 6 6" stroke="#eee" strokeWidth="1.200" fill="none" /></svg>
        </span>
        <span className="ml-[4px] flex w-[20px] justify-center">
          <svg width="16" height="12" viewBox="0 0 16 12"><path d="M1 1h4v2H1z" fill="#eee" /><rect x="3" y="3" width="12" height="7" fill="#eee" /><rect x="13" y="5" width="2" height="3" fill="#888" /></svg>
        </span>
        <span className="ml-[4px] flex w-[20px] justify-center">
          <svg width="18" height="11" viewBox="0 0 18 11"><path d="M4 11a3.500 3.500 0 0 1 0-7c1-4 8-5 9-1 4-1 6 6 2 8z" fill="#d8d8d8" /></svg>
        </span>
        <span className="ml-[4px] flex w-[20px] justify-center">
          <svg width="14" height="20" viewBox="0 0 14 20"><path d="M3 1c3-1 6-1 8 0M3 19c3 1 6 1 8 0" stroke="#eee" fill="none" /><rect x="1" y="6" width="7" height="8" stroke="#eee" fill="none" /><path d="M9 9l3-2v6l-3-2" stroke="#eee" fill="none" /></svg>
        </span>
        <span className="ml-[5px] flex w-[20px] justify-center">
          <svg width="16" height="16" viewBox="0 0 16 16"><path d="M1 15C2 8 8 2 15 1M5 15c1-4 5-8 10-9M9 15c0-2 3-5 6-5" stroke="#999" fill="none" /><circle cx="13.500" cy="13.500" r="1.500" fill="#eee" /></svg>
        </span>
        <span className="ml-[3px] flex w-[20px] justify-center">
          <svg width="18" height="14" viewBox="0 0 18 14"><path d="M1 5h3l4-4v12L4 9H1z" stroke="#eee" fill="none" /><path d="M11 4c1 2 1 4 0 6M13 2c2 3 2 7 0 10M15 1c3 4 3 8 0 12" stroke="#eee" fill="none" /></svg>
        </span>
        <span className="ml-[5px] flex w-[26px] justify-center">
          <svg width="23" height="12" viewBox="0 0 23 12"><rect x=".5" y=".5" width="22" height="11" stroke="#eee" fill="none" /><path d="M3 3.500h17M3 6h17" stroke="#eee" strokeDasharray="1 1" /><path d="M6 9h11" stroke="#eee" /></svg>
        </span>
        <span className="ml-[8px] w-[24px] text-center text-[12px]">ESP</span>
        <div className="ml-[9px] flex w-[60px] flex-col items-center text-[12px] leading-[18px]">
          <span>17:19</span>
          <span className="whitespace-nowrap">29/11/2021</span>
        </div>
        <div className="relative ml-[14px] mr-[25px] h-[20px] w-[16px]">
          <svg width="16" height="16" viewBox="0 0 16 16"><path d="M0 1h16v11H6l-3 3v-3H0z" fill="#fff" /><path d="M3 4h10M3 6.500h10M3 9h7" stroke="#444" /></svg>
          <span className="absolute left-[7px] top-[3px] flex h-[16px] w-[16px] items-center justify-center rounded-full border border-[#888] bg-[#3a3a3a] text-[11px] font-bold text-white">6</span>
        </div>
      </div>
    </div>
  );
}

export default function App() {
  return (
    <div className="flex h-[1080px] w-[1920px] flex-col overflow-hidden bg-white font-['Roboto',sans-serif] text-[12px]">
      <div className="flex h-[24px] shrink-0 items-center">
        <span className="ml-[3px] flex w-[20px]"><SketchUpLogo s={15} /></span>
        <span className="text-[12px] tracking-[-0.05px] text-black">Sin título - SketchUp Pro 2019</span>
        <div className="ml-auto flex h-full items-center text-black">
          <span className="flex w-[45px] justify-center"><Minus size={12} strokeWidth={1.200} /></span>
          <span className="flex w-[45px] justify-center">
            <svg width="11" height="11" viewBox="0 0 11 11"><path d="M2.500 2.500V.5h8v8h-2M.5 2.500h8v8h-8z" stroke="#111" fill="none" /></svg>
          </span>
          <span className="mr-[4px] flex w-[45px] justify-center"><X size={15} strokeWidth={1.200} /></span>
        </div>
      </div>
      <div className="flex h-[17px] shrink-0 items-center gap-[13px] pl-[7px] text-[12px] text-black">
        <span><u>A</u>rchivo</span>
        <span><u>E</u>dición</span>
        <span><u>V</u>er</span>
        <span><u>C</u>ámara</span>
        <span>D<u>i</u>bujo</span>
        <span><u>H</u>erramientas</span>
        <span>Ve<u>n</u>tana</span>
        <span>E<u>x</u>tensiones</span>
        <span>A<u>y</u>uda</span>
      </div>
      <TopToolbar />
      <div className="flex min-h-0 flex-1">
        <LeftToolbar />
        <Viewport />
        <RightPanel />
      </div>
      <StatusBar />
      <Taskbar />
    </div>
  );
}
